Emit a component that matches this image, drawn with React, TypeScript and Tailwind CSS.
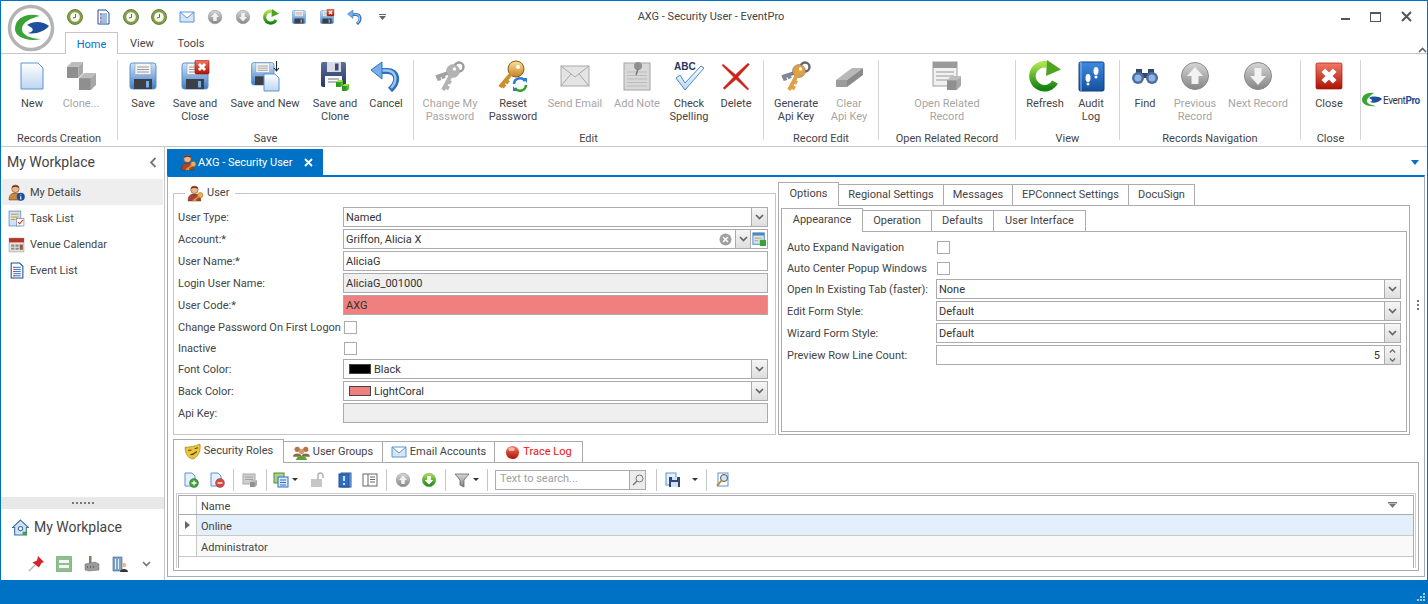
import React from "react";

const line = "border-[#ababab]";

function Defs() {
  const g: [string, string, string][] = [
    ["blue", "#cfe3f8", "#3f7cc4"],
    ["paper", "#ffffff", "#bcd6f1"],
    ["green", "#a8e24c", "#14830f"],
    ["grey", "#d6d6d6", "#858585"],
    ["red", "#f27a66", "#ad1206"],
    ["gold", "#fde29a", "#c77f20"],
    ["navy", "#5b6f99", "#28385f"],
    ["book", "#3f8ae0", "#14509f"],
  ];
  return (
    <svg width="0" height="0" className="absolute">
      <defs>
        {g.map(([id, a, b]) => (
          <linearGradient key={id} id={id} x1="0" y1="0" x2="0" y2="1">
            <stop offset="0" stopColor={a} />
            <stop offset="1" stopColor={b} />
          </linearGradient>
        ))}
      </defs>
    </svg>
  );
}

function Ico({ s = 32, v = 32, children }: { s?: number; v?: number; children: React.ReactNode }) {
  return (
    <svg width={s} height={s} viewBox={`0 0 ${v} ${v}`} className="shrink-0">
      {children}
    </svg>
  );
}

// ---- shapes shared between the large and small icons
const Floppy = () => (
  <>
    <rect x="3" y="3" width="26" height="26" rx="2.5" fill="url(#blue)" stroke="#5c8fca" />
    <rect x="8" y="3.5" width="16" height="11" fill="#f4f4f4" stroke="#8aa7c6" strokeWidth=".6" />
    <path d="M10 7h12M10 9.5h12M10 12h12" stroke="#9a9a9a" />
    <rect x="7" y="19" width="18" height="10" fill="#3d3f47" />
    <rect x="19" y="21" width="3" height="6.5" fill="#79aee2" />
  </>
);
const XBox = ({ x = 18, y = 1, w = 13 }: { x?: number; y?: number; w?: number }) => (
  <>
    <rect x={x} y={y} width={w} height={w} rx="1.5" fill="url(#red)" stroke="#a3180d" strokeWidth=".7" />
    <path
      d={`M${x + w * 0.28} ${y + w * 0.28}L${x + w * 0.72} ${y + w * 0.72}M${x + w * 0.72} ${y + w * 0.28}L${x + w * 0.28} ${y + w * 0.72}`}
      stroke="#fff"
      strokeWidth={w * 0.2}
    />
  </>
);
const Cube = ({ x, y, s, c = ["#bdbdbd", "#8f8f8f", "#a8a8a8"] }: { x: number; y: number; s: number; c?: string[] }) => (
  <>
    <path d={`M${x} ${y + s * 0.3}L${x + s * 0.3} ${y}H${x + s}L${x + s * 0.7} ${y + s * 0.3}Z`} fill={c[0]} />
    <path d={`M${x} ${y + s * 0.3}H${x + s * 0.7}V${y + s}H${x}Z`} fill={c[1]} />
    <path d={`M${x + s * 0.7} ${y + s * 0.3}L${x + s} ${y}V${y + s * 0.7}L${x + s * 0.7} ${y + s}Z`} fill={c[2]} />
  </>
);
const UndoShape = () => (
  <>
    <path d="M9 11H17C27 11 30 21 20 30" fill="none" stroke="#2f6fc0" strokeWidth="6" />
    <path d="M9 10.5H17C26 11 28.5 20 21 28" fill="none" stroke="#9cc6f2" strokeWidth="2.4" />
    <path d="M1 10L12 2V19Z" fill="#76aee8" stroke="#2f6fc0" />
  </>
);
const RefreshShape = () => (
  <>
    <path d="M26 22A12 12 0 1 1 18 4.5" fill="none" stroke="url(#green)" strokeWidth="6.5" />
    <path d="M18 0L32 9.5L17 16Z" fill="#4da51f" />
  </>
);
const Keys = ({ a, b, ring }: { a: string; b: string; ring: string }) => (
  <>
    <path d="M17 12L2 17M4 16l1.500 4.500M8.500 14.500l1.500 4" stroke={a} strokeWidth="3.800" fill="none" />
    <circle cx="25" cy="7" r="4.500" fill="none" stroke={ring} strokeWidth="2.400" />
    <circle cx="19" cy="11" r="6.500" fill={b} stroke={ring} strokeWidth=".5" />
    <path d="M17 15L9 30M10.500 26l4.500 2.500M13.500 21l3.500 2" stroke={b} strokeWidth="3.800" fill="none" />
    <circle cx="20.500" cy="9" r="1.700" fill="#fff" />
  </>
);
const Mail = ({ f, st }: { f: string; st: string }) => (
  <>
    <rect x="2" y="6" width="28" height="20" fill={f} stroke={st} />
    <path d="M2 6L16 17L30 6M2 26L12 14M30 26L20 14" fill="none" stroke={st} />
  </>
);
const ArrowCircle = ({ up, c = "url(#grey)" }: { up?: boolean; c?: string }) => (
  <>
    <circle cx="16" cy="16" r="13.500" fill={c} stroke="#8b8b8b" />
    <path
      d={up ? "M16 7L24 16H19.500V24H12.500V16H8Z" : "M16 25L24 16H19.500V8H12.500V16H8Z"}
      fill="#f2f2f2"
    />
  </>
);
const DocList = () => (
  <>
    <path d="M3 1H11L14 4V15H3Z" fill="#fff" stroke="#1d4f91" />
    <path d="M5 5h7M5 7h7M5 9h7M5 11h7M5 13h7" stroke="#2b6bc0" strokeWidth=".9" />
    <path d="M5 5h1.500M5 9h1.500M5 13h1.500" stroke="#d52a2a" strokeWidth=".9" />
  </>
);
const Clock = () => (
  <>
    <circle cx="8" cy="8" r="7.500" fill="#82a04a" stroke="#566f2c" strokeWidth=".8" />
    <circle cx="8" cy="8" r="4.800" fill="#f8f8ef" />
    <path d="M8.500 5V8.500L6 9" fill="none" stroke="#555" strokeWidth=".9" />
  </>
);
const Person = ({ body = "#a8442f" }: { body?: string }) => (
  <>
    <circle cx="7" cy="4.500" r="3.500" fill="#e9b98d" stroke="#7a3f22" strokeWidth=".5" />
    <path d="M3.500 3.500C4 .5 10 .5 10.500 3.500L7 2.500Z" fill="#6e3319" />
    <path d="M1 15C1 10 3.500 8.500 7 8.500S13 10 13 15Z" fill={body} stroke="#6b2a1c" strokeWidth=".5" />
  </>
);
const UserKey = () => (
  <Ico s={17} v={16}>
    <Person />
    <circle cx="12.500" cy="9.500" r="2.500" fill="#eeb04a" stroke="#9b6a16" strokeWidth=".5" />
    <path d="M11 11L5.500 15M7.500 13.500l1 1.500" stroke="#d49a35" strokeWidth="1.500" />
  </Ico>
);

const bigIcons: Record<string, React.ReactNode> = {
  new: <path d="M5 3H22L27 8V29H5Z" fill="url(#paper)" stroke="#5c92d2" />,
  clone: (
    <>
      <Cube x={2} y={2} s={16} />
      <Cube x={14} y={13} s={17} />
    </>
  ),
  save: <Floppy />,
  saveClose: (
    <>
      <Floppy />
      <XBox x={16} y={0} w={14} />
    </>
  ),
  saveNew: (
    <>
      <g transform="translate(0 0) scale(.86)">
        <Floppy />
      </g>
      <path d="M15 14H26L30 18V31H15Z" fill="url(#paper)" stroke="#5c92d2" />
      <path d="M27.500 1V10M25 8l2.500 3 2.500-3" fill="none" stroke="#222" strokeWidth="1.100" />
    </>
  ),
  saveClone: (
    <>
      <rect x="2" y="2" width="25" height="25" rx="2" fill="url(#navy)" />
      <rect x="8" y="2" width="14" height="10" fill="#d8dce6" />
      <rect x="16" y="3.500" width="3.500" height="7" fill="#3b4a72" />
      <rect x="6" y="16" width="17" height="11" fill="#fafafa" />
      <path d="M9 19h11M9 22h11" stroke="#778" />
      <Cube x={17} y={20} s={7} c={["#9fe04a", "#2e9a1c", "#56b82a"]} />
      <Cube x={23} y={24} s={7} c={["#9fe04a", "#2e9a1c", "#56b82a"]} />
    </>
  ),
  undo: <UndoShape />,
  keysGrey: <Keys a="#a2a2a2" b="#b3b3b3" ring="#9c9c9c" />,
  keyReset: (
    <>
      <circle cx="19" cy="9" r="8" fill="url(#gold)" stroke="#8b5a14" />
      <circle cx="21" cy="7" r="2" fill="#fff" />
      <path d="M14 14L3 27M5 24l3 3M8.500 20l3 3" stroke="#cf8f30" strokeWidth="4" fill="none" />
      <path d="M17 24A6 6 0 0 1 28 21" fill="none" stroke="#2d7ad6" strokeWidth="2.500" />
      <path d="M29 25A6 6 0 0 1 18 28" fill="none" stroke="#35a32a" strokeWidth="2.500" />
      <path d="M26 18l4 0 0 5zM20 31l-4 0 0-5z" fill="#2d7ad6" />
    </>
  ),
  mailGrey: <Mail f="#e4e4e4" st="#a9a9a9" />,
  note: (
    <>
      <rect x="3" y="3" width="26" height="27" fill="#d8d8d8" stroke="#a5a5a5" />
      <path d="M6 12h20M6 15.500h20M6 19h20M6 22.500h20M6 26h20" stroke="#bcbcbc" />
      <circle cx="17" cy="6" r="4" fill="#8f8f8f" />
      <path d="M17 9L15 15" stroke="#777" strokeWidth="1.500" />
    </>
  ),
  spell: (
    <>
      <text x="1" y="10" fontSize="10" fontWeight="700" fill="#27375f" fontFamily="Liberation Sans, sans-serif">
        ABC
      </text>
      <path d="M3 18L12 30L31 8L28 6L12 23L7 15Z" fill="url(#paper)" stroke="#4a86cc" />
    </>
  ),
  del: <path d="M3 4L15.500 14.500L28 3L29.500 4.500L18 17L29 29L27.500 30L16 19.500L4.500 29.500L3 28L13.500 17L2 5.500Z" fill="#c8261c" stroke="#e2665c" strokeWidth=".4" />,
  keysGold: <Keys a="#7f8794" b="#e0a045" ring="#5f6670" />,
  eraser: (
    <>
      <path d="M3 20L19 8H30L14 20Z" fill="#b8b8b8" />
      <path d="M30 8V15L14 27V20Z" fill="#8a8a8a" />
      <path d="M3 20H14V27H3Z" fill="#9c9c9c" />
    </>
  ),
  windowGrey: (
    <>
      <rect x="2" y="2" width="24" height="24" fill="#f1f1f1" stroke="#9d9d9d" />
      <rect x="2" y="2" width="24" height="6" fill="#9a9a9a" />
      <path d="M5 12h18M5 16h18M5 20h12" stroke="#b5b5b5" strokeWidth="1.500" />
      <Cube x={16} y={16} s={14} />
    </>
  ),
  refresh: <RefreshShape />,
  audit: (
    <>
      <rect x="4" y="2" width="25" height="29" rx="1.500" fill="url(#book)" stroke="#123f80" />
      <path d="M6 2V31" stroke="#8bbcf0" />
      <ellipse cx="21" cy="11" rx="2.500" ry="4" fill="#fff" />
      <circle cx="21" cy="17" r="1.500" fill="#fff" />
      <ellipse cx="13" cy="18" rx="2.500" ry="4" fill="#fff" />
      <circle cx="13" cy="24" r="1.500" fill="#fff" />
    </>
  ),
  find: (
    <>
      <rect x="7" y="9" width="6" height="6" fill="#34466f" />
      <rect x="19" y="9" width="6" height="6" fill="#34466f" />
      <rect x="12" y="13" width="8" height="5" fill="#34466f" />
      <circle cx="9" cy="18" r="6" fill="#4f6c9f" />
      <circle cx="23" cy="18" r="6" fill="#4f6c9f" />
      <circle cx="9" cy="18" r="3.500" fill="#8fb5e6" />
      <circle cx="23" cy="18" r="3.500" fill="#8fb5e6" />
    </>
  ),
  prev: <ArrowCircle up />,
  next: <ArrowCircle />,
  close: <XBox x={3} y={3} w={26} />,
};

type Btn = { k: string; t: string[]; w: string; off?: boolean };
type Group = { cap: string; w: string; pl: string; b: Btn[] };

const groups: Group[] = [
  {
    cap: "Records Creation",
    w: "w-[117px]",
    pl: "pl-[6px]",
    b: [
      { k: "new", t: ["New"], w: "w-[50px]" },
      { k: "clone", t: ["Clone..."], w: "w-[48px]", off: true },
    ],
  },
  {
    cap: "Save",
    w: "w-[296px]",
    pl: "pl-[7px]",
    b: [
      { k: "save", t: ["Save"], w: "w-[36px]" },
      { k: "saveClose", t: ["Save and", "Close"], w: "w-[68px]" },
      { k: "saveNew", t: ["Save and New"], w: "w-[72px]" },
      { k: "saveClone", t: ["Save and", "Clone"], w: "w-[68px]" },
      { k: "undo", t: ["Cancel"], w: "w-[34px]" },
    ],
  },
  {
    cap: "Edit",
    w: "w-[350px]",
    pl: "pl-[4px]",
    b: [
      { k: "keysGrey", t: ["Change My", "Password"], w: "w-[64px]", off: true },
      { k: "keyReset", t: ["Reset", "Password"], w: "w-[62px]" },
      { k: "mailGrey", t: ["Send Email"], w: "w-[62px]", off: true },
      { k: "note", t: ["Add Note"], w: "w-[62px]", off: true },
      { k: "spell", t: ["Check", "Spelling"], w: "w-[42px]" },
      { k: "del", t: ["Delete"], w: "w-[52px]" },
    ],
  },
  {
    cap: "Record Edit",
    w: "w-[115px]",
    pl: "pl-[4px]",
    b: [
      { k: "keysGold", t: ["Generate", "Api Key"], w: "w-[56px]" },
      { k: "eraser", t: ["Clear", "Api Key"], w: "w-[50px]", off: true },
    ],
  },
  {
    cap: "Open Related Record",
    w: "w-[137px]",
    pl: "pl-0",
    b: [{ k: "windowGrey", t: ["Open Related", "Record"], w: "w-[136px]", off: true }],
  },
  {
    cap: "View",
    w: "w-[104px]",
    pl: "pl-[7px]",
    b: [
      { k: "refresh", t: ["Refresh"], w: "w-[44px]" },
      { k: "audit", t: ["Audit", "Log"], w: "w-[48px]" },
    ],
  },
  {
    cap: "Records Navigation",
    w: "w-[181px]",
    pl: "pl-[7px]",
    b: [
      { k: "find", t: ["Find"], w: "w-[36px]" },
      { k: "prev", t: ["Previous", "Record"], w: "w-[64px]", off: true },
      { k: "next", t: ["Next Record"], w: "w-[62px]", off: true },
    ],
  },
  {
    cap: "Close",
    w: "w-[60px]",
    pl: "pl-0",
    b: [{ k: "close", t: ["Close"], w: "w-[56px]" }],
  },
];

function Logo() {
  return (
    <svg width="48" height="48" viewBox="0 0 48 48">
      <circle cx="24" cy="24" r="21.500" fill="#fff" stroke="#b4b4b4" strokeWidth="3.500" />
      <path d="M33 12C20 8 8 14 8 25C8 33 20 38 34 35C24 35 14 31 15 24C16 18 24 14 33 12Z" fill="#3aa335" />
      <path d="M20 21C26 17 36 17 42 22C38 27 28 31 21 29C26 28 29 25 20 21Z" fill="#1d4f9c" />
    </svg>
  );
}

function EventProLogo() {
  return (
    <span className="flex items-center -mt-[6px]">
      <svg width="22" height="16" viewBox="0 0 22 16">
        <path d="M12 1C5 0 0 3 0 8C0 12 6 15 14 14C8 13 4 11 5 8C6 5 9 3 12 1Z" fill="#3aa335" />
        <path d="M7 6C10 4 17 4 20 7C17 10 12 12 8 10C11 9 11 8 7 6Z" fill="#1d4f9c" />
      </svg>
      <span className="text-[10px] tracking-[-0.4px] text-[#333] -ml-[1px]">
        Event<span className="font-bold text-[#1d4f9c]">Pro</span>
      </span>
    </span>
  );
}

function RibbonGroup({ g }: { g: Group }) {
  return (
    <div className={`${g.w} h-[80px] shrink-0 border-r border-[#d4d4d4] flex flex-col`}>
      <div className={`flex flex-1 ${g.pl}`}>
        {g.b.map((b) => (
          <div key={b.k} className={`${b.w} shrink-0 flex flex-col items-center`}>
            <div className="h-[37px]">
              <Ico>{bigIcons[b.k]}</Ico>
            </div>
            {b.t.map((l) => (
              <div
                key={l}
                className={`leading-[13px] whitespace-nowrap ${b.off ? "text-[#a6a6a6]" : "text-[#444]"}`}
              >
                {l}
              </div>
            ))}
          </div>
        ))}
      </div>
      <div className="h-[14px] -mb-[5px] -mt-px leading-[14px] text-center text-[#444] relative top-[1px]">{g.cap}</div>
    </div>
  );
}

const qat: React.ReactNode[] = [
  <Clock />,
  <DocList />,
  <Clock />,
  <Clock />,
  <path d="M1 3H15V13H1Z M1 3L8 9L15 3" fill="#d5e6f8" stroke="#5b94d2" />,
  <g transform="scale(.5)">
    <ArrowCircle up />
  </g>,
  <g transform="scale(.5)">
    <ArrowCircle />
  </g>,
  <g transform="scale(.5)">
    <RefreshShape />
  </g>,
  <g transform="scale(.5)">
    <Floppy />
  </g>,
  <g transform="scale(.5)">
    <Floppy />
    <XBox x={16} y={0} w={14} />
  </g>,
  <g transform="scale(.5)">
    <UndoShape />
  </g>,
];

function Chevron({ c = "#666" }: { c?: string }) {
  return (
    <svg width="9" height="6" viewBox="0 0 9 6">
      <path d="M1 1L4.500 4.500L8 1" fill="none" stroke={c} strokeWidth="1.700" />
    </svg>
  );
}

function TitleBar() {
  return (
    <div className="h-[53px] flex border-b border-[#c6c6c6] shrink-0">
      <div className="w-[64px] shrink-0 pl-[6px] pt-[3px]">
        <Logo />
      </div>
      <div className="flex-1 flex flex-col">
        <div className="h-[31px] flex items-center">
          <div className="w-[336px] flex items-center gap-[8px] shrink-0">
            {qat.map((q, i) => (
              <div key={i} className="w-[20px] flex justify-center">
                <Ico s={16} v={16}>
                  {q}
                </Ico>
              </div>
            ))}
            <div className="w-[20px] flex justify-center -ml-[1px]">
              <svg width="7" height="6" viewBox="0 0 7 6">
                <path d="M0 0h7v1H0zM0 2h7L3.500 6z" fill="#666" />
              </svg>
            </div>
          </div>
          <div className="w-[620px] shrink-0 pt-px text-center text-[#444]">AXG - Security User - EventPro</div>
          <div className="ml-auto pr-[15px] flex items-center gap-[20px]">
            <div className="w-[9px] h-[2px] bg-[#555] mt-[4px]" />
            <div className="w-[11px] h-[10px] border border-[#555] border-t-2" />
            <svg width="11" height="11" viewBox="0 0 11 11">
              <path d="M1 1L10 10M10 1L1 10" stroke="#555" strokeWidth="2" />
            </svg>
          </div>
        </div>
        <div className="h-[21px] flex items-end">
          <div className="w-[53px] h-[22px] -mb-px pt-[3px] border-x border-t border-[#c6c6c6] bg-white flex items-center justify-center text-[#0072c6] relative z-10">
            Home
          </div>
          <div className="w-[48px] h-[21px] pt-[3px] flex items-center justify-center text-[#444]">View</div>
          <div className="w-[50px] h-[21px] pt-[3px] flex items-center justify-center text-[#444]">Tools</div>
          <div className="ml-auto pr-[19px] pb-[7px] rotate-180">
            <Chevron />
          </div>
        </div>
      </div>
    </div>
  );
}

function Ribbon() {
  return (
    <div className="h-[93px] shrink-0 border-b border-[#c6c6c6] flex pt-[6px]">
      {groups.map((g) => (
        <RibbonGroup key={g.cap} g={g} />
      ))}
      <div className="flex-1 flex items-center pl-[1px]">
        <EventProLogo />
      </div>
    </div>
  );
}

const navItems: [string, React.ReactNode, boolean][] = [
  [
    "My Details",
    <>
      <Person body="#c98a3a" />
      <circle cx="12" cy="12" r="3.800" fill="#1f4f9c" />
      <path d="M12 9.800v.8M12 11.500v3" stroke="#fff" />
    </>,
    true,
  ],
  [
    "Task List",
    <>
      <rect x="1" y="1" width="11" height="14" fill="#cfe2f6" stroke="#4f84c2" strokeWidth=".7" />
      <path d="M3 4h7M3 6.500h7M3 9h4" stroke="#d09a2c" />
      <rect x="8" y="8" width="7" height="7" fill="#fff" stroke="#7b8aa0" strokeWidth=".7" />
      <path d="M9.500 11.500L11 13L14 9.500" fill="none" stroke="#c92e2e" />
    </>,
    false,
  ],
  [
    "Venue Calendar",
    <>
      <rect x="1" y="2" width="14" height="13" fill="#e8e3dc" stroke="#8d8d8d" strokeWidth=".5" />
      <rect x="1" y="2" width="14" height="4" fill="#b7332a" />
      <path d="M3 8h3v2H3zM7 8h3v2H7zM3 11h3v2H3zM7 11h3v2H7z" fill="#8a8a8a" />
      <path d="M11 8h3v5h-3z" fill="#8d5d47" />
    </>,
    false,
  ],
  ["Event List", <DocList />, false],
];

function Sidebar() {
  return (
    <div className="w-[164px] shrink-0 border-r border-[#c6c6c6] flex flex-col">
      <div className="h-[30px] mb-[2px] flex items-center pl-[6px] pr-[7px] justify-between">
        <span className="text-[14px] text-[#444]">My Workplace</span>
        <svg width="8" height="11" viewBox="0 0 8 11">
          <path d="M6.500 1L2 5.500L6.500 10" fill="none" stroke="#777" strokeWidth="1.800" />
        </svg>
      </div>
      {navItems.map(([t, icon, on]) => (
        <div
          key={t}
          className={`h-[26px] flex items-center gap-[5px] ml-[1px] mr-[1px] pl-[6px] text-[#444] ${on ? "bg-[#eeeeee]" : ""}`}
        >
          <Ico s={17} v={16}>
            {icon}
          </Ico>
          <span className="pt-[2px]">{t}</span>
        </div>
      ))}
      <div className="flex-1" />
      <div className="h-[12px] bg-[#e8e8e8] flex items-center justify-center gap-[2px]">
        {[0, 1, 2, 3, 4, 5].map((i) => (
          <span key={i} className="w-[2px] h-[2px] bg-[#777]" />
        ))}
      </div>
      <div className="h-[36px] flex items-center pl-[11px] gap-[5px] text-[14px] text-[#444]">
        <Ico s={17} v={16}>
          <path d="M8 1L15.500 8H13.500V15H2.500V8H.5Z" fill="#cfe2f6" stroke="#3e6da8" />
          <circle cx="8" cy="9" r="2" fill="#fff" stroke="#3e6da8" />
          <rect x="10" y="12" width="4" height="3" fill="#3aa335" />
        </Ico>
        My Workplace
      </div>
      <div className="h-[35px] shrink-0 flex items-start pl-[27px] gap-[12px] pt-[11px]">
        <Ico s={16} v={16}>
          <path d="M10 0L16 6L13.500 7L11 11.500L4.500 6.500L9 4.500Z" fill="#d3242a" />
          <path d="M7 9L1 15" stroke="#b0b0b0" strokeWidth="1.300" />
        </Ico>
        <Ico s={16} v={16}>
          <rect x="0" y="0" width="16" height="16" rx="1.500" fill="#8fbf8f" stroke="#6b9c6b" strokeWidth=".5" />
          <rect x="3" y="4" width="10" height="3" fill="#f3f8f3" />
          <rect x="3" y="9" width="10" height="3" fill="#f3f8f3" />
        </Ico>
        <Ico s={16} v={16}>
          <path d="M1 8L11 6L15 8V14L5 15L1 14Z" fill="#9a9a9a" stroke="#666" strokeWidth=".5" />
          <path d="M5 0h2.500v7H5z" fill="#8a7a5a" />
          <path d="M3 11h1M6 11h1M9 11h1" stroke="#333" />
        </Ico>
        <Ico s={16} v={16}>
          <rect x="1" y="1" width="9" height="14" fill="#7fa2cc" stroke="#3f5f88" strokeWidth=".6" />
          <path d="M3 3h1v10H3zM6 3h1v10H6z" fill="#e4edf7" />
          <circle cx="12" cy="9" r="2.200" fill="#e9b98d" />
          <path d="M8 16C8 12 16 12 16 16Z" fill="#333" />
        </Ico>
        <div className="ml-[2px] pt-[5px]">
          <Chevron c="#777" />
        </div>
      </div>
    </div>
  );
}

function Field({
  children,
  gray,
  coral,
  w = "flex-1",
}: {
  children?: React.ReactNode;
  gray?: boolean;
  coral?: boolean;
  w?: string;
}) {
  return (
    <div
      className={`${w} h-[20px] border ${line} flex items-start leading-[20px] pl-[2px] text-[#333] ${gray ? "bg-[#efefef]" : coral ? "bg-[#f08080]" : "bg-white"}`}
    >
      {children}
    </div>
  );
}

function DropBtn() {
  return (
    <div className="w-[16px] h-full shrink-0 ml-auto border-l border-[#ababab] bg-gradient-to-b from-[#f6f6f6] to-[#dedede] flex items-center justify-center">
      <Chevron />
    </div>
  );
}

function Swatch({ c }: { c: string }) {
  return <span className={`w-[22px] h-[10px] self-center border border-[#444] ml-[3px] mr-[3px] shrink-0 ${c}`} />;
}

function Row({ label, h = "h-[22px]", w, children }: { label: string; h?: string; w: string; children: React.ReactNode }) {
  return (
    <div className={`${h} flex items-start`}>
      <div className={`${w} shrink-0 h-[20px] leading-[22px] text-[#444] whitespace-nowrap`}>{label}</div>
      {children}
    </div>
  );
}

function Check() {
  return <div className="w-[13px] h-[13px] border border-[#ababab] bg-white mt-[4px] ml-[1px]" />;
}

function UserBox() {
  const w = "w-[165px]";
  return (
    <div className="relative mt-[16px] w-[603px] h-[242px] shrink-0 border border-[#c6c6c6] pt-[13px] pl-[4px] pr-[7px]">
      <div className="absolute left-[11px] -top-[9px] bg-white flex items-center gap-[3px] px-[2px] pr-[6px] text-[#444] h-[17px]">
        <UserKey />
        User
      </div>
      <Row label="User Type:" w={w}>
        <Field>
          Named
          <DropBtn />
        </Field>
      </Row>
      <Row label="Account:*" w={w}>
        <Field>
          Griffon, Alicia X
          <svg width="13" height="13" viewBox="0 0 13 13" className="ml-auto mr-[3px] self-center">
            <circle cx="6.500" cy="6.500" r="6" fill="#a0a0a0" />
            <path d="M4 4L9 9M9 4L4 9" stroke="#fff" strokeWidth="1.500" />
          </svg>
          <div className="w-[15px] h-full shrink-0 border-l border-[#ababab] bg-gradient-to-b from-[#f6f6f6] to-[#dedede] flex items-center justify-center">
            <Chevron />
          </div>
          <div className="w-[17px] h-full shrink-0 border-l border-[#ababab] flex items-center justify-center">
            <Ico s={14} v={16}>
              <rect x="1" y="1" width="13" height="13" fill="#cfe2f6" stroke="#4f84c2" />
              <rect x="1" y="1" width="13" height="3" fill="#4f84c2" />
              <path d="M3 7h8M3 10h4" stroke="#d09a2c" />
              <rect x="9" y="9" width="7" height="7" fill="#3aa335" />
            </Ico>
          </div>
        </Field>
      </Row>
      <Row label="User Name:*" w={w}>
        <Field>AliciaG</Field>
      </Row>
      <Row label="Login User Name:" w={w}>
        <Field gray>AliciaG_001000</Field>
      </Row>
      <Row label="User Code:*" w={w}>
        <Field coral>AXG</Field>
      </Row>
      <Row label="Change Password On First Logon" h="h-[21px]" w={w}>
        <Check />
      </Row>
      <Row label="Inactive" h="h-[21px]" w={w}>
        <Check />
      </Row>
      <Row label="Font Color:" w={w}>
        <Field>
          <Swatch c="bg-black" />
          Black
          <DropBtn />
        </Field>
      </Row>
      <Row label="Back Color:" w={w}>
        <Field>
          <Swatch c="bg-[#f08080]" />
          LightCoral
          <DropBtn />
        </Field>
      </Row>
      <Row label="Api Key:" w={w}>
        <Field gray />
      </Row>
    </div>
  );
}

function Tab({ t, w, on, icon, red }: { t: string; w: string; on?: boolean; icon?: React.ReactNode; red?: boolean }) {
  return (
    <div
      className={`${w} shrink-0 flex items-center justify-center gap-[3px] whitespace-nowrap ${red ? "text-[#f01010]" : "text-[#444]"} ${on ? "h-[24px] -mb-px bg-white relative z-10 border-x border-t border-[#ababab] pb-px" : "h-[21px] border-t border-r border-[#ababab]"}`}
    >
      {icon}
      {t}
    </div>
  );
}

function OptionsPanel() {
  const w = "w-[149px]";
  return (
    <div className="ml-[2px] mt-[5px] w-[632px] shrink-0 flex flex-col">
      <div className="h-[23px] flex items-end">
        <Tab t="Options" w="w-[61px]" on />
        <Tab t="Regional Settings" w="w-[105px]" />
        <Tab t="Messages" w="w-[69px]" />
        <Tab t="EPConnect Settings" w="w-[116px]" />
        <Tab t="DocuSign" w="w-[66px]" />
      </div>
      <div className="h-[230px] border border-[#ababab] pt-[2px] px-[2px] pb-[2px] flex flex-col">
        <div className="h-[23px] flex items-end">
          <Tab t="Appearance" w="w-[82px]" on />
          <Tab t="Operation" w="w-[69px]" />
          <Tab t="Defaults" w="w-[62px]" />
          <Tab t="User Interface" w="w-[92px]" />
        </div>
        <div className="flex-1 border border-[#ababab] pt-[5px] pl-[5px] pr-[5px]">
          <Row label="Auto Expand Navigation" h="h-[21px]" w={w}>
            <Check />
          </Row>
          <Row label="Auto Center Popup Windows" h="h-[21px]" w={w}>
            <Check />
          </Row>
          <Row label="Open In Existing Tab (faster):" w={w}>
            <Field>
              None
              <DropBtn />
            </Field>
          </Row>
          <Row label="Edit Form Style:" w={w}>
            <Field>
              Default
              <DropBtn />
            </Field>
          </Row>
          <Row label="Wizard Form Style:" w={w}>
            <Field>
              Default
              <DropBtn />
            </Field>
          </Row>
          <Row label="Preview Row Line Count:" w={w}>
            <Field>
              <span className="ml-auto pr-[4px]">5</span>
              <div className="w-[16px] h-full shrink-0 border-l border-[#ababab] bg-gradient-to-b from-[#f6f6f6] to-[#dedede] flex flex-col items-center justify-center gap-[3px]">
                <span className="rotate-180 flex scale-75">
                  <Chevron />
                </span>
                <span className="flex scale-75">
                  <Chevron />
                </span>
              </div>
            </Field>
          </Row>
        </div>
      </div>
    </div>
  );
}

function Slot({ w = "w-[26px]", ml = "", caret, children }: { w?: string; ml?: string; caret?: boolean; children: React.ReactNode }) {
  return (
    <div className={`${w} ${ml} shrink-0 flex items-center justify-center gap-[3px]`}>
      <Ico s={16} v={16}>
        {children}
      </Ico>
      {caret && (
        <svg width="6" height="3" viewBox="0 0 6 3">
          <path d="M0 0h6L3 3z" fill="#333" />
        </svg>
      )}
    </div>
  );
}

function Sep({ ml }: { ml: string }) {
  return <div className={`${ml} w-px h-[22px] bg-[#c6c6c6] shrink-0`} />;
}

const PageBadge = ({ c, d }: { c: string; d: string }) => (
  <>
    <path d="M2 1H9L12 4V14H2Z" fill="#e6f0fb" stroke="#5c92d2" />
    <circle cx="11" cy="11" r="4.500" fill={c} stroke="#444" strokeWidth=".4" />
    <path d={d} stroke="#fff" strokeWidth="1.300" />
  </>
);

function GridToolbar() {
  return (
    <div className="h-[30px] pt-[3px] flex items-center shrink-0">
      <Slot ml="ml-[4px]">
        <PageBadge c="#3aa335" d="M8.500 11h5M11 8.500v5" />
      </Slot>
      <Slot>
        <PageBadge c="#d9463f" d="M8.500 11h5" />
      </Slot>
      <Sep ml="ml-[3px]" />
      <Slot ml="ml-[3px]">
        <rect x="1" y="2" width="12" height="10" fill="#cfcfcf" stroke="#a8a8a8" />
        <path d="M3 5h8M3 7.500h8" stroke="#a0a0a0" />
        <Cube x={8} y={8} s={7} />
      </Slot>
      <Sep ml="ml-[3px]" />
      <Slot w="w-[30px]" ml="ml-[3px]" caret>
        <rect x="1" y="1" width="10" height="10" fill="#a9d18e" stroke="#568a36" />
        <rect x="5" y="5" width="10" height="10" fill="#dbe8f7" stroke="#2f6fc0" />
        <path d="M7 8h6M7 10.500h6M7 13h6" stroke="#2f6fc0" />
      </Slot>
      <Slot ml="ml-[5px]">
        <rect x="1" y="7" width="11" height="8" fill="#c6c6c6" />
        <path d="M8 7V3.500A2.500 2.500 0 0 1 13 3.500V6" fill="none" stroke="#b0b0b0" strokeWidth="1.500" />
      </Slot>
      <Slot ml="ml-px">
        <rect x="4" y="1" width="10" height="14" fill="#8fb5e6" stroke="#2f5f9e" />
        <rect x="2" y="2" width="10" height="13" fill="#2f6fc0" stroke="#1d4f91" />
        <path d="M7 4v5M7 11v2" stroke="#fff" strokeWidth="1.500" />
      </Slot>
      <Slot w="w-[24px]">
        <rect x="1" y="2" width="14" height="12" fill="#fff" stroke="#666" />
        <path d="M6 2v12M8 5h5M8 7.500h5M8 10h5" stroke="#667" />
      </Slot>
      <Sep ml="ml-[4px]" />
      <Slot ml="ml-[3px]">
        <g transform="scale(.5)">
          <ArrowCircle up />
        </g>
      </Slot>
      <Slot>
        <g transform="scale(.5)">
          <ArrowCircle c="url(#green)" />
          <path d="M16 25L24 16H19.500V8H12.500V16H8Z" fill="#fff" />
        </g>
      </Slot>
      <Sep ml="ml-[3px]" />
      <Slot w="w-[34px]" ml="ml-[3px]" caret>
        <path d="M1 2H15L10 8V15L6 13V8Z" fill="url(#grey)" stroke="#555" strokeWidth=".7" />
      </Slot>
      <Sep ml="ml-[4px]" />
      <div className={`ml-[7px] w-[151px] h-[20px] border ${line} flex items-center pl-[4px] text-[#a0a0a0] shrink-0`}>
        Text to search...
        <div className="ml-auto w-[16px] h-full border-l border-[#ababab] bg-[#ececec] flex items-center justify-center">
          <svg width="12" height="12" viewBox="0 0 12 12">
            <circle cx="7.500" cy="4.500" r="3.500" fill="none" stroke="#777" />
            <path d="M5 7L1 11" stroke="#777" strokeWidth="1.500" />
          </svg>
        </div>
      </div>
      <Sep ml="ml-[10px]" />
      <div className="w-[40px] shrink-0 flex items-center ml-[3px] pl-[5px] gap-[11px]">
        <Ico s={16} v={16}>
          <rect x="1" y="1" width="10" height="12" fill="#e6f0fb" stroke="#5c92d2" />
          <rect x="4" y="5" width="11" height="10" fill="#34466f" />
          <rect x="7" y="5" width="5" height="3" fill="#cfe2f6" />
          <rect x="6" y="10" width="7" height="5" fill="#cfe2f6" />
        </Ico>
        <svg width="6" height="3" viewBox="0 0 6 3">
          <path d="M0 0h6L3 3z" fill="#333" />
        </svg>
      </div>
      <Sep ml="ml-[6px]" />
      <Slot ml="ml-[3px]">
        <rect x="3" y="1" width="10" height="13" fill="#fff" stroke="#5c92d2" />
        <circle cx="9" cy="6" r="3.500" fill="#cfe2f6" stroke="#555" />
        <path d="M6.500 8.500L2 14" stroke="#c77f20" strokeWidth="1.800" />
      </Slot>
    </div>
  );
}

function Grid() {
  return (
    <div className="flex-1 ml-[2px] mr-[2px] border-x border-t border-[#cfcfcf] pt-px px-px mb-[2px] flex flex-col">
      <div className="flex-1 border-x border-t border-[#ababab] text-[#444]">
        <div className="h-[19px] flex border-b border-[#ababab]">
          <div className="w-[18px] border-r border-[#c6c6c6]" />
          <div className="flex-1 pl-[4px] leading-[22px]">Name</div>
          <div className="pr-[16px] pt-[6px]">
            <svg width="9" height="6" viewBox="0 0 9 6">
              <path d="M0 0h9v1.500H0zM1 2h7L4.500 6z" fill="#777" />
            </svg>
          </div>
        </div>
        <div className="h-[21px] flex border-b border-[#c8c8c8] bg-[#e3effa]">
          <div className="w-[18px] bg-white border-r border-[#c6c6c6] flex items-center justify-center">
            <svg width="5" height="8" viewBox="0 0 5 8">
              <path d="M0 0L5 4L0 8Z" fill="#666" />
            </svg>
          </div>
          <div className="flex-1 pl-[4px] leading-[23px]">Online</div>
        </div>
        <div className="h-[21px] flex border-b border-[#c8c8c8] bg-[#f9f9f9]">
          <div className="w-[18px] bg-white border-r border-[#c6c6c6]" />
          <div className="flex-1 pl-[4px] leading-[23px]">Administrator</div>
        </div>
      </div>
    </div>
  );
}

function BottomTabs() {
  return (
    <div className="mt-[1px] flex flex-col flex-1">
      <div className="h-[26px] flex items-end shrink-0">
        <Tab
          t="Security Roles"
          w="w-[111px]"
          on
          icon={
            <Ico s={17} v={16}>
              <path d="M1 4C5 4 11 3 15 1C16 7 14 12 9 15C4 15 1 10 1 4Z" fill="#e8c53a" stroke="#9a7a14" strokeWidth=".6" />
              <path d="M4 7l3-.5M10 5.500l3-1M6 11c2 0 4-1 6-3" stroke="#5a4510" fill="none" />
            </Ico>
          }
        />
        <Tab
          t="User Groups"
          w="w-[99px]"
          icon={
            <Ico s={17} v={16}>
              <circle cx="4" cy="5" r="2.500" fill="#b8744a" />
              <circle cx="12" cy="5" r="2.500" fill="#b8744a" />
              <path d="M0 12C0 8 8 8 8 12ZM8 12C8 8 16 8 16 12Z" fill="#8a6a4a" />
              <circle cx="8" cy="7" r="2.500" fill="#d09a6a" />
              <path d="M3 15C3 10 13 10 13 15Z" fill="#5aa53a" />
            </Ico>
          }
        />
        <Tab
          t="Email Accounts"
          w="w-[112px]"
          icon={
            <Ico s={16} v={16}>
              <path d="M1 3H15V13H1Z M1 3L8 9L15 3" fill="#d5e6f8" stroke="#5b94d2" />
            </Ico>
          }
        />
        <Tab
          t="Trace Log"
          w="w-[88px]"
          red
          icon={
            <Ico s={15} v={16}>
              <circle cx="8" cy="8" r="7" fill="url(#red)" />
              <ellipse cx="7" cy="4.500" rx="3.500" ry="2" fill="#f6b4aa" />
            </Ico>
          }
        />
      </div>
      <div className="flex-1 border border-[#ababab] flex flex-col mb-[5px]">
        <GridToolbar />
        <Grid />
      </div>
    </div>
  );
}

function Content() {
  return (
    <div className="flex-1 min-w-0 pl-[2px] pr-[2px] pt-[2px] pb-[3px] flex flex-col relative">
      <div className="h-[26px] shrink-0 flex items-center">
        <div className="w-[156px] h-[26px] bg-[#0072c6] flex items-center pl-[13px] text-white">
          <UserKey />
          <span className="ml-[1px] pt-[2px]">AXG - Security User</span>
          <svg width="9" height="9" viewBox="0 0 9 9" className="ml-auto mr-[10px]">
            <path d="M1 1L8 8M8 1L1 8" stroke="#fff" strokeWidth="1.800" />
          </svg>
        </div>
        <svg width="8" height="5" viewBox="0 0 8 5" className="ml-auto mr-[6px]">
          <path d="M0 0h8L4 5z" fill="#0072c6" />
        </svg>
      </div>
      <div className="flex-1 border-t-2 border-t-[#0072c6] border-x border-b border-[#ababab] px-[5px] flex flex-col min-h-0 relative">
        <div className="flex">
          <UserBox />
          <OptionsPanel />
          <div className="ml-[7px] mt-[123px] flex flex-col gap-[2px]">
            <span className="w-[2px] h-[2px] bg-[#777]" />
            <span className="w-[2px] h-[2px] bg-[#777]" />
            <span className="w-[2px] h-[2px] bg-[#777]" />
          </div>
        </div>
        <BottomTabs />
      </div>
    </div>
  );
}

export default function App() {
  return (
    <div
      className="w-[1428px] h-[604px] flex flex-col bg-white border-x border-t border-[#0072c6] overflow-hidden text-[11px]"
      style={{ fontFamily: 'Roboto, "Noto Sans", sans-serif' }}
    >
      <Defs />
      <TitleBar />
      <Ribbon />
      <div className="flex-1 flex min-h-0">
        <Sidebar />
        <Content />
      </div>
      <div className="h-[24px] shrink-0 -mx-px bg-[#0072c6] flex justify-end items-end pr-[3px] pb-[3px]">
        <svg width="8" height="8" viewBox="0 0 8 8">
          <path d="M6 0h2v2H6zM3 3h2v2H3zM6 3h2v2H6zM0 6h2v2H0zM3 6h2v2H3zM6 6h2v2H6z" fill="#a9cde9" />
        </svg>
      </div>
    </div>
  );
}
